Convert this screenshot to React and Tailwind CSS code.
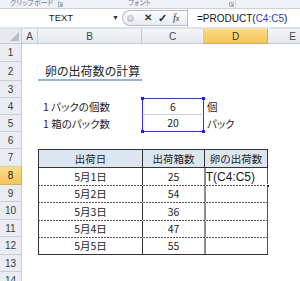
import React from "react";

const jp = "font-['Noto_Sans_CJK_JP',sans-serif]";
const ui = "font-['Liberation_Sans',Arial,sans-serif]";
const palt = "[font-feature-settings:'palt']";
const dashTop =
  "pt-[1px] bg-[repeating-linear-gradient(90deg,#555_0_2px,transparent_2px_3px)] bg-[length:100%_1px] bg-no-repeat";

const Launcher = () => (
  <svg width="5" height="5" viewBox="0 0 5 5" className="shrink-0">
    <path d="M0.5 0.5h4v4h-4z" fill="none" stroke="#9aa6b6" strokeWidth="0.8" />
    <path d="M1.5 1.5l2 2M3.5 2.2v1.3h-1.3" fill="none" stroke="#7d8a9c" strokeWidth="0.8" />
  </svg>
);

function ColHead({ w, label, active }) {
  return (
    <div
      className={`${w} shrink-0 border-r border-b flex items-center justify-center text-[10px] ${ui} ${
        active
          ? "bg-linear-to-b from-[#fbdc84] to-[#f5c45a] border-[#e2ab45] text-[#333]"
          : "bg-linear-to-b from-[#f3f5f8] to-[#e4e8ed] border-[#c5cbd3] text-[#444]"
      }`}
    >
      {label}
    </div>
  );
}

function Row({ h, n, active, children }) {
  return (
    <div className={`flex ${h}`}>
      <div
        className={`w-[22px] shrink-0 border-r border-b flex items-center justify-center text-[10px] ${ui} ${
          active
            ? "bg-linear-to-b from-[#fbdc84] to-[#f5c45a] border-[#e2ab45] text-[#222]"
            : "bg-[#e9ecf0] border-[#c7cdd5] text-[#3a3a3a]"
        }`}
      >
        {n}
      </div>
      <div className="w-[16px] shrink-0" />
      {children}
    </div>
  );
}

const dates = [
  { d: "5月1日", v: "25" },
  { d: "5月2日", v: "54" },
  { d: "5月3日", v: "36" },
  { d: "5月4日", v: "47" },
  { d: "5月5日", v: "55" },
];
const dataHeights = ["h-[18px]", "h-[17px]", "h-[18px]", "h-[17px]", "h-[18px]"];

export default function App() {
  return (
    <div className={`w-[300px] h-[281px] overflow-hidden bg-white text-[#1e1e1e] ${jp}`}>
      {/* ribbon group labels, cut off at the top */}
      <div className={`h-[9px] flex bg-[#eef2f7] border-b border-[#c9d2dd] overflow-hidden text-[7px] leading-[7px] text-[#6b7a8f] ${palt}`}>
        <div className="w-[59px] shrink-0 border-r border-[#cdd5df] flex items-start pl-[10px] gap-[5px]">
          <span className="-mt-[1px] whitespace-nowrap">クリップボード</span>
          <span className="mt-[2px]"><Launcher /></span>
        </div>
        <div className="w-[177px] shrink-0 border-r border-[#cdd5df] flex items-start">
          <span className="-mt-[1px] ml-[69px] whitespace-nowrap">フォント</span>
          <span className="mt-[2px] ml-[78px]"><Launcher /></span>
        </div>
        <div className="flex-1" />
      </div>

      {/* formula bar */}
      <div className={`h-[18px] flex bg-white ${ui}`}>
        <div className="w-[122px] shrink-0 relative flex items-center justify-center text-[9.5px] text-[#222]">
          TEXT
          <span className="absolute right-[3px] top-[4px] text-[7px] text-[#333]">▼</span>
        </div>
        <div className="w-[65px] shrink-0 h-[16px] mt-[1px] rounded-l-full border border-r-0 border-[#b3bcc8] bg-linear-to-b from-[#fbfcfd] to-[#e8ecf1] flex items-center">
          <span className="ml-[4px] w-[7px] h-[7px] rounded-full bg-linear-to-b from-[#e9ecf0] to-[#c3c9d1] border border-[#b6bdc7]" />
          <span className="ml-[10px] text-[10px] font-bold text-[#3a3a3a] leading-none">✕</span>
          <span className="ml-[6px] text-[11px] font-bold text-[#2b2b2b] leading-none">✓</span>
          <span className="ml-[6px] text-[10px] italic font-['Liberation_Serif',serif] text-[#333] leading-none">
            f<span className="text-[8px]">x</span>
          </span>
        </div>
        <div className="flex-1 border-l border-[#b3bcc8] pl-[9px] flex items-center text-[10px] text-[#111] whitespace-nowrap">
          =PRODUCT(<span className="text-[#2b3dcc]">C4:C5</span>)
        </div>
      </div>
      <div className="h-[2px] bg-[#dde2e8]" />

      {/* column headers */}
      <div className="flex h-[15px]">
        <div className="w-[22px] shrink-0 border-r border-b border-[#c5cbd3] bg-[#e6e9ee] flex items-end justify-end pr-[2px] pb-[2px]">
          <svg width="9" height="9" viewBox="0 0 9 9">
            <path d="M9 0V9H0Z" fill="#b7bec7" />
          </svg>
        </div>
        <ColHead w="w-[16px]" label="A" />
        <ColHead w="w-[104px]" label="B" />
        <ColHead w="w-[62px]" label="C" />
        <ColHead w="w-[64px]" label="D" active />
        <ColHead w="w-[50px]" label="E" />
      </div>

      <Row h="h-[18px]" n="1" />
      <Row h="h-[19px]" n="2">
        <div className={`w-[104px] shrink-0 border-b-2 border-[#95b3d7] pl-[7px] flex items-center text-[12px] ${palt}`}>
          卵の出荷数の計算
        </div>
      </Row>
      <Row h="h-[17px]" n="3" />
      <Row h="h-[17px]" n="4">
        <div className={`w-[104px] shrink-0 pl-[5px] flex items-center text-[10.5px] ${palt}`}>1 パックの個数</div>
        <div className="w-[62px] shrink-0 relative border-t border-l border-r border-[#2f2fff] border-b border-b-[#c9cde0] flex items-center justify-center text-[10.5px]">
          6
          <span className="absolute -left-[2px] -top-[2px] w-[3px] h-[3px] bg-[#1f1fff]" />
          <span className="absolute -right-[2px] -top-[2px] w-[3px] h-[3px] bg-[#1f1fff]" />
        </div>
        <div className="w-[64px] shrink-0 pl-[3px] flex items-center text-[10.5px]">個</div>
      </Row>
      <Row h="h-[17px]" n="5">
        <div className={`w-[104px] shrink-0 pl-[5px] flex items-center text-[10.5px] ${palt}`}>1 箱のパック数</div>
        <div className="w-[62px] shrink-0 relative border-b border-l border-r border-[#2f2fff] flex items-center justify-center text-[10.5px]">
          20
          <span className="absolute -left-[2px] -bottom-[2px] w-[3px] h-[3px] bg-[#1f1fff]" />
          <span className="absolute -right-[2px] -bottom-[2px] w-[3px] h-[3px] bg-[#1f1fff]" />
        </div>
        <div className={`w-[64px] shrink-0 pl-[3px] flex items-center text-[10.5px] ${palt}`}>パック</div>
      </Row>
      <Row h="h-[17px]" n="6" />

      {/* table header */}
      <Row h="h-[18px]" n="7">
        <div className="w-[230px] shrink-0 flex border-t border-[#333] text-[10.5px]">
          <div className="w-[104px] shrink-0 border-l border-[#333] bg-[#dce6f1] flex items-center justify-center">出荷日</div>
          <div className="w-[62px] shrink-0 border-l border-[#333] bg-[#dce6f1] flex items-center justify-center">出荷箱数</div>
          <div className="w-[64px] shrink-0 border-l border-r border-[#333] bg-[#dce6f1] flex items-center justify-center">卵の出荷数</div>
        </div>
      </Row>

      {dates.map((row, i) => (
        <Row key={row.d} h={dataHeights[i]} n={String(8 + i)} active={i === 0}>
          <div
            className={`w-[230px] shrink-0 flex text-[10.5px] ${i === 0 ? "border-t border-[#333]" : dashTop} ${
              i === 4 ? "border-b border-[#333]" : ""
            }`}
          >
            <div className="w-[104px] shrink-0 border-l border-[#333] bg-white flex items-center justify-center">{row.d}</div>
            <div className="w-[62px] shrink-0 border-l border-[#333] bg-white flex items-center justify-center">{row.v}</div>
            <div className="w-[64px] shrink-0 relative bg-white border-l-2 border-r border-l-[#8d8d8d] border-r-[#555]">
              {i === 0 && (
                <>
                  <div className={`absolute inset-0 overflow-hidden flex items-center justify-end pr-[12px] whitespace-nowrap text-[12px] text-[#1a1a1a] ${ui}`}>
                    =PRODUCT(C4:C5)
                  </div>
                  <span className="absolute -right-[3px] -bottom-[3px] w-[4px] h-[4px] bg-[#111] border border-white" />
                </>
              )}
            </div>
          </div>
        </Row>
      ))}
      <Row h="h-[17px]" n="13" />
      <Row h="h-[18px]" n="14" />
    </div>
  );
}
